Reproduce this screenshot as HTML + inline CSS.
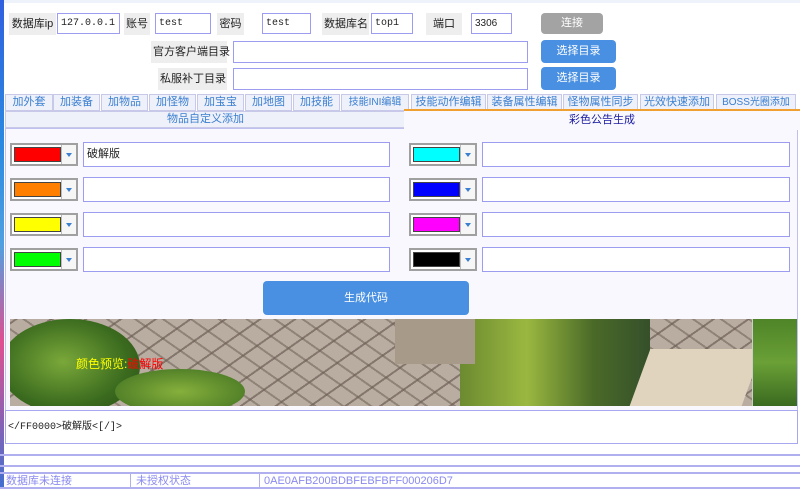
<!DOCTYPE html><html><head><meta charset="utf-8"><style>
*{margin:0;padding:0;box-sizing:border-box}
body{width:800px;height:489px;overflow:hidden;background:#fff;position:relative;font-family:"Liberation Sans","Noto Sans CJK SC",sans-serif;font-size:11px;color:#222}
.a{position:absolute}
.lb{position:absolute;background:#eeeeee;line-height:22px;height:22px;font-size:11px;padding:0 2px;white-space:nowrap;text-align:center}
.in{position:absolute;border:1px solid #9c9cf0;background:#fff;font-family:"Liberation Mono","Noto Sans CJK SC",monospace;font-size:10px;line-height:19px;padding-left:3px;white-space:nowrap}
.bt{position:absolute;border-radius:4px;color:#fff;text-align:center;font-size:11px}
.tab{position:absolute;top:94px;height:17px;border:1px solid #c8c8e8;background:#eef0fa;color:#3a7fd0;text-align:center;font-size:11px;line-height:15px;white-space:nowrap;overflow:hidden}
.cb{position:absolute;width:68px;height:23px;border:2px solid #a0a0a0;background:#fff}
.cb i{position:absolute;left:2px;top:2px;width:47px;height:15px;border:1px solid #444}
.cb b{position:absolute;right:0;top:0;width:15px;height:19px;border-left:1px solid #bbb;background:#f6f6f6}
.cb b:after{content:"";position:absolute;left:4px;top:8px;border:3px solid transparent;border-top:4px solid #3b7fd0}
.tx{position:absolute;height:25px;border:1px solid #9c9cf0;background:#fff;font-size:11px;line-height:23px;padding-left:3px}
</style></head><body>
<div class="a" style="left:0;top:0;width:4px;height:489px;background:linear-gradient(#3060e0,#2a8ae0 30%,#50a0e0 50%,#e05090 70%,#4070d0)"></div>
<div class="a" style="left:4px;top:0;width:796px;height:3px;background:#eef2fa"></div>
<div class="lb" style="left:9px;top:13px;width:47px">数据库ip</div>
<div class="in" style="left:57px;top:13px;width:63px;height:21px">127.0.0.1</div>
<div class="lb" style="left:124px;top:13px;width:26px">账号</div>
<div class="in" style="left:155px;top:13px;width:56px;height:21px">test</div>
<div class="lb" style="left:217px;top:13px;width:27px">密码</div>
<div class="in" style="left:262px;top:13px;width:49px;height:21px">test</div>
<div class="lb" style="left:322px;top:13px;width:47px">数据库名</div>
<div class="in" style="left:371px;top:13px;width:42px;height:21px">top1</div>
<div class="lb" style="left:426px;top:13px;width:36px">端口</div>
<div class="in" style="left:471px;top:13px;width:41px;height:21px;font-family:'Liberation Sans',sans-serif">3306</div>
<div class="bt" style="left:541px;top:13px;width:62px;height:21px;background:#a3a3a3;line-height:21px">连接</div>
<div class="lb" style="left:151px;top:41px;width:76px">官方客户端目录</div>
<div class="in" style="left:233px;top:41px;width:295px;height:22px"></div>
<div class="bt" style="left:541px;top:40px;width:75px;height:23px;background:#4a90e2;line-height:23px">选择目录</div>
<div class="lb" style="left:158px;top:68px;width:69px">私服补丁目录</div>
<div class="in" style="left:233px;top:68px;width:295px;height:22px"></div>
<div class="bt" style="left:541px;top:67px;width:75px;height:23px;background:#4a90e2;line-height:23px">选择目录</div>
<div class="tab" style="left:5px;width:48px">加外套</div>
<div class="tab" style="left:53px;width:47px">加装备</div>
<div class="tab" style="left:101px;width:47px">加物品</div>
<div class="tab" style="left:149px;width:47px">加怪物</div>
<div class="tab" style="left:197px;width:47px">加宝宝</div>
<div class="tab" style="left:245px;width:47px">加地图</div>
<div class="tab" style="left:293px;width:47px">加技能</div>
<div class="tab" style="left:341px;width:68px;font-size:10px">技能INI编辑</div>
<div class="tab" style="left:411px;width:75px">技能动作编辑</div>
<div class="tab" style="left:487px;width:75px">装备属性编辑</div>
<div class="tab" style="left:563px;width:75px">怪物属性同步</div>
<div class="tab" style="left:640px;width:74px">光效快速添加</div>
<div class="tab" style="left:716px;width:80px;font-size:10px">BOSS光圈添加</div>
<div class="tab" style="left:5px;top:111px;width:401px">物品自定义添加</div>
<div class="a" style="left:5px;top:128px;width:793px;height:303px;border:1px solid #c0c0f0;background:#f8f8fe"></div>
<div class="a" style="left:404px;top:109px;width:396px;height:21px;border-top:2px solid #f0a030;background:#f8f8fe;color:#1a1aa0;text-align:center;line-height:18px;font-size:11px">彩色公告生成</div>
<div class="cb" style="left:10px;top:143px"><i style="background:#f00"></i><b></b></div>
<div class="cb" style="left:10px;top:178px"><i style="background:#ff8000"></i><b></b></div>
<div class="cb" style="left:10px;top:213px"><i style="background:#ff0"></i><b></b></div>
<div class="cb" style="left:10px;top:248px"><i style="background:#0f0"></i><b></b></div>
<div class="cb" style="left:409px;top:143px"><i style="background:#0ff"></i><b></b></div>
<div class="cb" style="left:409px;top:178px"><i style="background:#00f"></i><b></b></div>
<div class="cb" style="left:409px;top:213px"><i style="background:#f0f"></i><b></b></div>
<div class="cb" style="left:409px;top:248px"><i style="background:#000"></i><b></b></div>
<div class="tx" style="left:83px;top:142px;width:307px">破解版</div>
<div class="tx" style="left:83px;top:177px;width:307px"></div>
<div class="tx" style="left:83px;top:212px;width:307px"></div>
<div class="tx" style="left:83px;top:247px;width:307px"></div>
<div class="tx" style="left:482px;top:142px;width:308px"></div>
<div class="tx" style="left:482px;top:177px;width:308px"></div>
<div class="tx" style="left:482px;top:212px;width:308px"></div>
<div class="tx" style="left:482px;top:247px;width:308px"></div>
<div class="bt" style="left:263px;top:281px;width:206px;height:34px;background:#4a90e2;line-height:34px">生成代码</div>
<div class="a" style="left:10px;top:319px;width:787px;height:87px;overflow:hidden;background:repeating-linear-gradient(35deg,#b9ada2 0 14px,#8f8276 14px 16px),#b9ada2">
<div class="a" style="left:0;top:0;width:787px;height:87px;background:repeating-linear-gradient(-35deg,transparent 0 18px,rgba(110,95,85,.7) 18px 20px)"></div>
<div class="a" style="left:-10px;top:0;width:140px;height:95px;border-radius:50%;background:radial-gradient(ellipse at 45% 45%,#7aa83a,#3a6a1e 60%,#2a4a16)"></div>
<div class="a" style="left:105px;top:50px;width:130px;height:45px;border-radius:50%;background:radial-gradient(ellipse,#86b03c,#3e6e20)"></div>
<div class="a" style="left:450px;top:0;width:190px;height:87px;background:linear-gradient(90deg,#6c8a30,#9ab840 35%,#4a6a28 70%,#35502a)"></div>
<div class="a" style="left:385px;top:0;width:80px;height:45px;background:#a89a88"></div>
<div class="a" style="left:630px;top:30px;width:112px;height:57px;background:#e0d4be;transform:skewX(-20deg)"></div>
<div class="a" style="left:742px;top:0;width:45px;height:87px;border-left:1px solid #ccc;background:linear-gradient(#4f8428,#6aa036 50%,#3a6a20)"></div>
</div>
<div class="a" style="left:76px;top:355px;color:#ff0;font-size:12px;white-space:nowrap">颜色预览:<span style="color:#f00">破解版</span></div>
<div class="a" style="left:5px;top:410px;width:793px;height:34px;border:1px solid #a8a8f0;background:#fff;font-family:'Liberation Mono','Noto Sans CJK SC',monospace;font-size:10px;line-height:34px;padding-left:2px">&lt;/FF0000&gt;破解版&lt;[/]&gt;</div>
<div class="a" style="left:0;top:454px;width:800px;height:2px;background:#b0b0f0"></div>
<div class="a" style="left:0;top:465px;width:800px;height:2px;background:#b0b0f0"></div>
<div class="a" style="left:0;top:472px;width:800px;height:2px;background:#b0b0f0"></div>
<div class="a" style="left:0;top:487px;width:800px;height:2px;background:#b0b0f0"></div>
<div class="a" style="left:130px;top:474px;width:1px;height:14px;background:#b0b0f0"></div>
<div class="a" style="left:259px;top:474px;width:1px;height:14px;background:#b0b0f0"></div>
<div class="a" style="left:6px;top:474px;color:#8a8af0;font-size:11px;line-height:14px">数据库未连接</div>
<div class="a" style="left:136px;top:474px;color:#8a8af0;font-size:11px;line-height:14px">未授权状态</div>
<div class="a" style="left:264px;top:474px;color:#8a8af0;font-size:11px;line-height:14px">0AE0AFB200BDBFEBFBFF000206D7</div>
</body></html>
